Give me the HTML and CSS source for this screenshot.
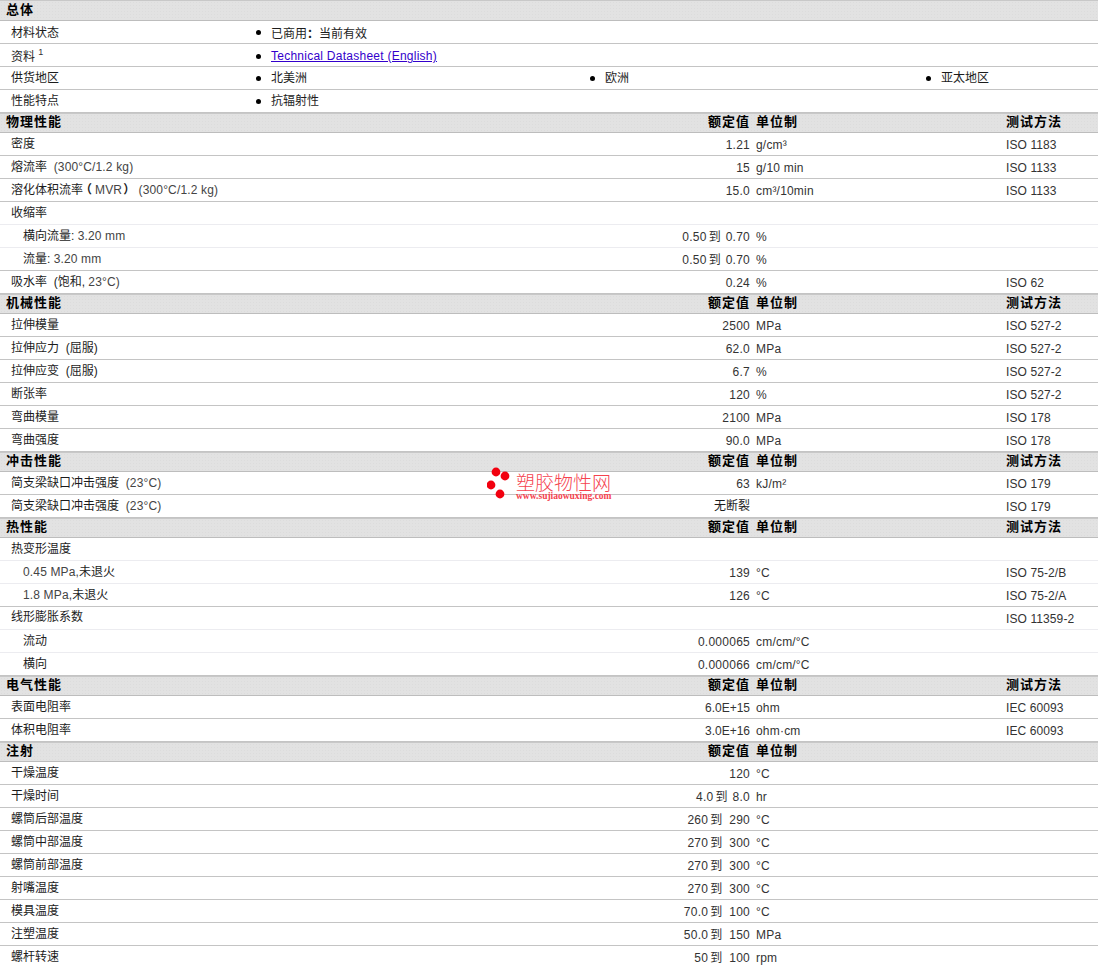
FILE: index.html
```html
<!DOCTYPE html>
<html lang="zh">
<head>
<meta charset="utf-8">
<title>材料参数</title>
<link rel="stylesheet" href="styles.css">
</head>
<body>
<main class="sheet">
<div class="head"><b class="name">总体</b></div>
<div class="row gen nudge"><span class="name">材料状态</span><ul class="list"><li>已商用<span class="colon">：</span>当前有效</li></ul></div>
<div class="row gen low"><span class="name">资料 <sup>1</sup></span><ul class="list"><li><a href="#">Technical Datasheet (English)</a></li></ul></div>
<div class="row gen"><span class="name">供货地区</span><ul class="list"><li>北美洲</li><li>欧洲</li><li>亚太地区</li></ul></div>
<div class="row gen"><span class="name">性能特点</span><ul class="list"><li>抗辐射性</li></ul></div>

<div class="head"><b class="name">物理性能</b><b class="val">额定值</b><b class="unit">单位制</b><b class="test">测试方法</b></div>
<div class="row"><span class="name">密度</span><span class="val">1.21</span><span class="unit">g/cm³</span><span class="test">ISO 1183</span></div>
<div class="row"><span class="name">熔流率&nbsp; <span class="lat">(300°C/1.2 kg)</span></span><span class="val">15</span><span class="unit">g/10 min</span><span class="test">ISO 1133</span></div>
<div class="row"><span class="name">溶化体积流率<span class="open">（</span><span class="lat">MVR</span><span class="close">）</span>&nbsp;<span class="lat">(300°C/1.2 kg)</span></span><span class="val">15.0</span><span class="unit">cm³/10min</span><span class="test">ISO 1133</span></div>
<div class="row parent"><span class="name">收缩率</span></div>
<div class="row sub"><span class="name">横向流量: <span class="lat">3.20 mm</span></span><span class="val">0.50<span class="to near">到</span>0.70</span><span class="unit">%</span></div>
<div class="row sub last"><span class="name">流量: <span class="lat">3.20 mm</span></span><span class="val">0.50<span class="to near">到</span>0.70</span><span class="unit">%</span></div>
<div class="row"><span class="name">吸水率&nbsp; (饱和, <span class="lat">23°C)</span></span><span class="val">0.24</span><span class="unit">%</span><span class="test">ISO 62</span></div>

<div class="head"><b class="name">机械性能</b><b class="val">额定值</b><b class="unit">单位制</b><b class="test">测试方法</b></div>
<div class="row"><span class="name">拉伸模量</span><span class="val">2500</span><span class="unit">MPa</span><span class="test">ISO 527-2</span></div>
<div class="row"><span class="name">拉伸应力&nbsp; (屈服)</span><span class="val">62.0</span><span class="unit">MPa</span><span class="test">ISO 527-2</span></div>
<div class="row"><span class="name">拉伸应变&nbsp; (屈服)</span><span class="val">6.7</span><span class="unit">%</span><span class="test">ISO 527-2</span></div>
<div class="row"><span class="name">断张率</span><span class="val">120</span><span class="unit">%</span><span class="test">ISO 527-2</span></div>
<div class="row"><span class="name">弯曲模量</span><span class="val">2100</span><span class="unit">MPa</span><span class="test">ISO 178</span></div>
<div class="row"><span class="name">弯曲强度</span><span class="val">90.0</span><span class="unit">MPa</span><span class="test">ISO 178</span></div>

<div class="head"><b class="name">冲击性能</b><b class="val">额定值</b><b class="unit">单位制</b><b class="test">测试方法</b></div>
<div class="row"><span class="name">简支梁缺口冲击强度&nbsp; <span class="lat">(23°C)</span></span><span class="val">63</span><span class="unit">kJ/m²</span><span class="test">ISO 179</span></div>
<div class="row"><span class="name">简支梁缺口冲击强度&nbsp; <span class="lat">(23°C)</span></span><span class="val up">无断裂</span><span class="unit"></span><span class="test">ISO 179</span></div>

<div class="head"><b class="name">热性能</b><b class="val">额定值</b><b class="unit">单位制</b><b class="test">测试方法</b></div>
<div class="row parent"><span class="name">热变形温度</span></div>
<div class="row sub"><span class="name"><span class="lat">0.45 MPa,</span>未退火</span><span class="val">139</span><span class="unit">°C</span><span class="test">ISO 75-2/B</span></div>
<div class="row sub last"><span class="name"><span class="lat">1.8 MPa,</span>未退火</span><span class="val">126</span><span class="unit">°C</span><span class="test">ISO 75-2/A</span></div>
<div class="row parent tight"><span class="name">线形膨胀系数</span><span class="val"></span><span class="unit"></span><span class="test">ISO 11359-2</span></div>
<div class="row sub"><span class="name">流动</span><span class="val">0.000065</span><span class="unit">cm/cm/°C</span></div>
<div class="row sub last"><span class="name">横向</span><span class="val">0.000066</span><span class="unit">cm/cm/°C</span></div>

<div class="head"><b class="name">电气性能</b><b class="val">额定值</b><b class="unit">单位制</b><b class="test">测试方法</b></div>
<div class="row"><span class="name">表面电阻率</span><span class="val sci">6.0E+15</span><span class="unit">ohm</span><span class="test">IEC 60093</span></div>
<div class="row"><span class="name">体积电阻率</span><span class="val sci">3.0E+16</span><span class="unit">ohm·cm</span><span class="test">IEC 60093</span></div>

<div class="head"><b class="name">注射</b><b class="val">额定值</b><b class="unit">单位制</b></div>
<div class="row"><span class="name">干燥温度</span><span class="val">120</span><span class="unit">°C</span></div>
<div class="row"><span class="name">干燥时间</span><span class="val">4.0<span class="to near">到</span>8.0</span><span class="unit">hr</span></div>
<div class="row"><span class="name">螺筒后部温度</span><span class="val">260<span class="to">到</span>290</span><span class="unit">°C</span></div>
<div class="row"><span class="name">螺筒中部温度</span><span class="val">270<span class="to">到</span>300</span><span class="unit">°C</span></div>
<div class="row"><span class="name">螺筒前部温度</span><span class="val">270<span class="to">到</span>300</span><span class="unit">°C</span></div>
<div class="row"><span class="name">射嘴温度</span><span class="val">270<span class="to">到</span>300</span><span class="unit">°C</span></div>
<div class="row"><span class="name">模具温度</span><span class="val">70.0<span class="to">到</span>100</span><span class="unit">°C</span></div>
<div class="row"><span class="name">注塑温度</span><span class="val">50.0<span class="to">到</span>150</span><span class="unit">MPa</span></div>
<div class="row"><span class="name">螺杆转速</span><span class="val">50<span class="to">到</span>100</span><span class="unit">rpm</span></div>

<div class="mark">
<svg class="dots" width="26" height="34" viewBox="0 0 26 34"><circle cx="9" cy="5" r="4.4"/><circle cx="18" cy="9" r="4.4"/><circle cx="4" cy="18" r="4.4"/><circle cx="13" cy="27" r="4.4"/></svg>
<div class="mark-text"><div class="mark-cn">塑胶物性网</div><div class="mark-url">www.sujiaowuxing.com</div></div>
</div>
</main>
</body>
</html>
```
FILE: styles.css
```css
html, body { margin: 0; padding: 0; background: #fff; }
body { width: 1098px; height: 968px; overflow: hidden; }
.sheet {
  position: relative;
  font: 12px/16px "Liberation Sans", "Noto Sans CJK SC", sans-serif;
  color: #333;
}
.head, .row {
  display: grid;
  grid-template-columns: 750px 6px 250px 92px;
  box-sizing: border-box;
}
.head {
  height: 20px;
  background-color: #e2e2e2;
  background-image: radial-gradient(#dcdcdc 0.6px, transparent 0.7px);
  background-size: 3px 3px;
  border-top: 1px solid #c8c8c8;
  border-bottom: 1px solid #bdbdbd;
  color: #000;
  font-size: 13px;
  letter-spacing: 1px;
  line-height: 16px;
}
.head:first-child { height: 21px; padding-top: 1px; }
.row { height: 23px; border-bottom: 1px solid #c4c4c4; padding-top: 3px; }
.row.sub { border-bottom-color: #ececf0; }
.row.sub.last { border-bottom-color: #c4c4c4; }
.row.parent { border-bottom-color: #ececf0; }
.name, .val { grid-column: 1; grid-row: 1; }
.name { padding-left: 11px; white-space: nowrap; color: #1c1c1c; }
.head .name { padding-left: 6px; color: #000; }
.sub .name { padding-left: 23px; }
.tight .name { margin-top: -1px; }
.lat { color: #444; letter-spacing: 0.15px; }
.val { text-align: right; white-space: nowrap; padding-top: 1px; letter-spacing: 0.25px; }
.val.sci { letter-spacing: 0; }
.head .val { padding-top: 0; letter-spacing: 1px; }
.val.up { padding-top: 0; letter-spacing: 0; color: #1c1c1c; }
.to { margin: 0 7px 0 2px; letter-spacing: 0; }
.to.near { margin-right: 5px; }
.unit { grid-column: 3; grid-row: 1; white-space: nowrap; padding-top: 1px; letter-spacing: 0.2px; }
.head .unit { padding-top: 0; letter-spacing: 1px; }
.test { grid-column: 3 / 5; grid-row: 1; padding-left: 250px; white-space: nowrap; padding-top: 1px; letter-spacing: 0.1px; }
.head .test { padding-top: 0; letter-spacing: 1px; }
.open, .close, .colon { font-weight: bold; }
.open, .close { font-feature-settings: "halt"; }
.open { padding: 0 3px; }
.close { padding: 0 6px 0 1px; }
.colon { font-family: "Noto Sans CJK TC", sans-serif; }
sup { font-size: 9px; line-height: 0; color: #333; vertical-align: 6px; }
a { color: #3300cc; letter-spacing: 0.25px; }
.gen { display: flex; }
.gen .name { width: 257px; box-sizing: border-box; flex: none; }
.list { display: flex; margin: 0; padding: 0; list-style: none; flex: 1; color: #1c1c1c; }
.list li { position: relative; padding-left: 15px; width: 335px; box-sizing: border-box; margin-left: -1px; }
.list li:nth-child(2) { width: 337px; }
.list li:last-child { width: auto; flex: 1; }
.nudge .name, .nudge .list { padding-top: 1px; }
.nudge li::before { margin-top: -1px; }
.low .name { padding-top: 2px; }
.low .list { padding-top: 1px; }
.list li::before {
  content: "";
  position: absolute;
  left: 0;
  top: 6px;
  width: 5px;
  height: 5px;
  border-radius: 50%;
  background: #000;
}
.mark {
  position: absolute;
  left: 487px;
  top: 467px;
  display: flex;
  gap: 3px;
}
.dots { fill: #f2000f; flex: none; }
.mark-text { color: #f5434f; width: 96px; }
.mark-cn { font: 300 19px/19px "Noto Sans CJK SC", sans-serif; margin-top: 5px; white-space: nowrap; }
.mark-url { font: bold 9.5px/8px "Liberation Serif", serif; white-space: nowrap; margin-top: 1px; }
```
